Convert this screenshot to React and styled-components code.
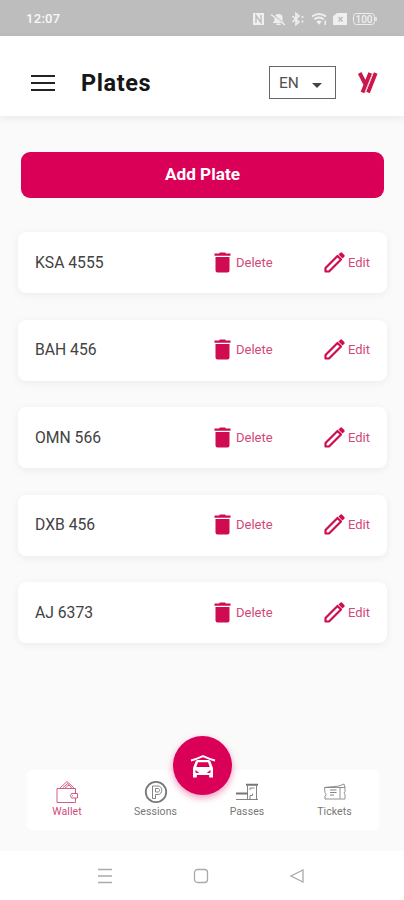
import styled, { createGlobalStyle, css } from 'styled-components'

const plates = ['KSA 4555', 'BAH 456', 'OMN 566', 'DXB 456', 'AJ 6373']

export default function App() {
  return (
    <>
      <GlobalStyle />
      <Screen>
        <StatusBar>
          <Clock>12:07</Clock>
          <StatusIcons />
        </StatusBar>
        <Header>
          <MenuButton aria-label="Menu">
            <span />
            <span />
            <span />
          </MenuButton>
          <Title>Plates</Title>
          <Language>
            EN
            <Caret />
          </Language>
          <Logo />
        </Header>
        <Main>
          <AddButton>Add Plate</AddButton>
          <PlateList>
            {plates.map((plate) => (
              <PlateCard key={plate}>
                <PlateNumber>{plate}</PlateNumber>
                <Action $width={112}>
                  <TrashIcon />
                  Delete
                </Action>
                <Action>
                  <EditIcon />
                  Edit
                </Action>
              </PlateCard>
            ))}
          </PlateList>
        </Main>
        <TabBar>
          <Tab $active>
            <WalletIcon />
            Wallet
          </Tab>
          <Tab>
            <SessionsIcon />
            Sessions
          </Tab>
          <Tab>
            <PassesIcon />
            Passes
          </Tab>
          <Tab>
            <TicketsIcon />
            Tickets
          </Tab>
          <ParkButton aria-label="Park">
            <CarIcon />
          </ParkButton>
        </TabBar>
        <SystemNav>
          <svg width="16" height="16" viewBox="0 0 16 16">
            <path d="M1 1.500h14M1 8h14M1 14.500h14" />
          </svg>
          <svg width="16" height="16" viewBox="0 0 16 16">
            <rect x="1.500" y="1.500" width="13" height="13" rx="3" />
          </svg>
          <svg width="16" height="16" viewBox="0 0 16 16">
            <path d="M14 2v12L2 8z" />
          </svg>
        </SystemNav>
      </Screen>
    </>
  )
}

function StatusIcons() {
  return (
    <StatusSvg width="126" height="16" viewBox="0 0 126 16">
      {/* nfc */}
      <path d="M2 2h11v12H2z" fill="#efefef" />
      <path d="M5 12V4.500l5 7V4" stroke="#bdbdbd" strokeWidth="1.400" fill="none" />
      {/* muted bell */}
      <path d="M21.500 12l2-2V6.500q0-3.500 4-3.500t4 3.500V10l2 2zM25.500 12.500h4V14h-4z" fill="#efefef" />
      <path d="M21 3l13 11" stroke="#bdbdbd" strokeWidth="2" />
      <path d="M20 3.500l14 10.500" stroke="#efefef" strokeWidth="1.400" />
      {/* bluetooth */}
      <path d="M41.500 5l6.500 6-3 2.500v-11l3 2.500-6.500 6M51.500 5v2M51.500 9.500v2" stroke="#efefef" strokeWidth="1.600" fill="none" />
      {/* wifi */}
      <path d="M61 5.500q7-5 14 0M63.300 8.300q4.700-3.500 9.400 0" stroke="#efefef" strokeWidth="2" fill="none" />
      <path d="M65.300 10.500q2.700-2 5.400 0L68 13.800zM73.500 9.500H75v4.500h-1.500z" fill="#efefef" />
      {/* sim */}
      <path d="M86 2h10v12H82V5.500z" fill="#efefef" />
      <path d="M87.500 6l4 4.500M91.500 6l-4 4.500" stroke="#bdbdbd" strokeWidth="1.500" />
      {/* battery */}
      <rect x="102.500" y="2.500" width="21" height="11" rx="3" fill="none" stroke="#ededed" />
      <path d="M125 6v4" stroke="#ededed" strokeWidth="1.500" />
      <text x="113" y="11.500" textAnchor="middle" fontSize="10" fontWeight="500" fill="#efefef">100</text>
    </StatusSvg>
  )
}

function Logo() {
  return (
    <svg width="22" height="24" viewBox="0 0 22 24" fill="none" stroke="#ca184d" strokeWidth="3.900">
      <path d="M2.700 2l5.300 10.500M13.200 2L5.500 21.500M18.700 2L11 21.500" />
      <path d="M16 2L8 22" stroke="#f3c6d3" strokeWidth="1" />
    </svg>
  )
}

function TrashIcon() {
  return (
    <svg width="27" height="27" viewBox="0 0 27 27" fill="currentColor">
      <path d="M5.500 4.500H10l1-1h5l1 1h4.500v2.200h-16zM6.500 8h14v13.500q0 2-2 2h-10q-2 0-2-2z" />
    </svg>
  )
}

function EditIcon() {
  return (
    <svg width="27" height="27" viewBox="0 0 27 27">
      <path
        d="M4.500 22.500v-3.500L16.500 7l3.500 3.500L8 22.500z"
        fill="none"
        stroke="currentColor"
        strokeWidth="2.200"
        strokeLinejoin="round"
      />
      <path d="M17.500 5.500l1.800-1.800q.9-.9 1.800 0l2.200 2.200q.9.900 0 1.800l-1.800 1.800z" fill="currentColor" />
    </svg>
  )
}

function WalletIcon() {
  return (
    <svg width="24" height="24" viewBox="0 0 24 24">
      <path d="M2 8.500h18.500v5M20.500 18v4.500H2v-14M4.500 8.500L12 1.500l7.500 7M8 7.500l5-4 4 5M14 5l-4 3" />
      <path d="M16.500 13.500h6V18h-6q-2-2.200 0-4.500zM17 15.800h1" />
    </svg>
  )
}

function SessionsIcon() {
  return (
    <svg width="24" height="24" viewBox="0 0 24 24">
      <circle cx="12" cy="12" r="10.200" strokeWidth="1.800" />
      <path d="M8.500 18.500V6H14c5 0 5 8.500 0 8.500h-2.500v4zM11.500 8.500H14c2 0 2 3.500 0 3.500h-2.500z" />
    </svg>
  )
}

function PassesIcon() {
  return (
    <svg width="24" height="24" viewBox="0 0 24 24">
      <path d="M1 19.500h22M12.500 19.500v-14M21.500 5.500v14M15 19.500v-4h2.500v-2M15 10V8h4.500" />
      <path d="M11 4.800h12M1 13.500h12" strokeWidth="1.900" />
    </svg>
  )
}

function TicketsIcon() {
  return (
    <svg width="24" height="24" viewBox="0 0 24 24">
      <path
        strokeWidth=".8"
        d="M1.500 7.500L16 6l5-2 1 3.500v4q-2 1.500 0 3v4.500h-20v-3q2.500-1.700 0-3.500zM2 7.500h20M17 7.500v11"
      />
      <path d="M7 10h6.500M7 12.500h6.500M7 15h4" />
    </svg>
  )
}

function CarIcon() {
  return (
    <svg width="26" height="26" viewBox="0 0 26 26">
      <path d="M1 7.500Q7 6 13 3.200Q19 6 25 7.500" fill="none" stroke="#fff" strokeWidth="2" />
      <path
        fillRule="evenodd"
        fill="#fff"
        d="M7.500 7h11q1.500 0 2 1.500l2.500 6.500V24.500h-3.800V22H6.800v2.500H3V15l2.500-6.500Q6 7 7.500 7zM8 9.300L6.300 14h13.400L18 9.300zM5.500 17v2.500q2 1 3.500 0.300zM20.500 17v2.500q-2 1-3.500 0.300z"
      />
    </svg>
  )
}

const GlobalStyle = createGlobalStyle`
  * {
    box-sizing: border-box;
  }

  body {
    margin: 0;
    font-family: Roboto, sans-serif;
  }

  button {
    border: 0;
    padding: 0;
    background: none;
    font-family: inherit;
  }
`

const Screen = styled.div`
  display: flex;
  flex-direction: column;
  width: 404px;
  height: 900px;
  background: #fafafa;
  overflow: hidden;
`

const StatusBar = styled.div`
  display: flex;
  align-items: center;
  justify-content: space-between;
  flex: 0 0 36px;
  padding: 1px 27px 0 26px;
  background: #bdbdbd;
  color: #f8f8f8;
`

const Clock = styled.span`
  font-size: 13px;
  font-weight: 500;
  letter-spacing: 0.3px;
`

const StatusSvg = styled.svg`
  font-family: Roboto, sans-serif;
`

const Header = styled.header`
  display: flex;
  align-items: center;
  flex: 0 0 80px;
  padding: 13px 25px 0 31px;
  background: #fff;
  box-shadow: 0 2px 8px rgba(0, 0, 0, 0.07);
`

const MenuButton = styled.button`
  display: flex;
  flex-direction: column;
  gap: 5px;
  width: 24px;
  margin-right: 26px;

  span {
    height: 2px;
    background: #222;
  }
`

const Title = styled.h1`
  flex: 1;
  margin: 0;
  font-size: 23.500px;
  font-weight: 700;
  letter-spacing: 0.6px;
  line-height: 28px;
  color: #161616;
`

const Language = styled.div`
  display: flex;
  align-items: center;
  justify-content: space-between;
  width: 67px;
  height: 33px;
  margin-right: 21px;
  padding: 0 13px 0 9px;
  border: 1px solid #666;
  font-size: 15.500px;
  color: #505050;
`

const Caret = styled.span`
  margin-top: 5px;
  border: 5.500px solid transparent;
  border-top-color: #444;
  border-bottom: 0;
`

const Main = styled.main`
  flex: 1;
  padding: 36px 17px 0 18px;
`

const AddButton = styled.button`
  display: block;
  width: 363px;
  height: 46px;
  margin: 0 0 34px 3px;
  padding-bottom: 2px;
  border-radius: 9px;
  background: #da0057;
  color: #fff;
  font-size: 17.200px;
  font-weight: 700;
`

const PlateList = styled.div`
  display: flex;
  flex-direction: column;
  gap: 26.500px;
`

const PlateCard = styled.div`
  display: flex;
  align-items: center;
  height: 61px;
  padding: 0 17px 1px 17px;
  border-radius: 8px;
  background: #fff;
  box-shadow: 0 2px 8px rgba(0, 0, 0, 0.06);
`

const PlateNumber = styled.span`
  flex: 1;
  font-size: 15.700px;
  color: #424242;
`

const Action = styled.button`
  display: flex;
  align-items: center;
  width: ${({ $width }) => ($width ? `${$width}px` : 'auto')};
  color: #d3477a;
  font-size: 13px;

  svg {
    color: #cf0c51;
  }
`

const TabBar = styled.nav`
  position: relative;
  display: grid;
  grid-template-columns: 80px 97px 86px 89px;
  height: 60px;
  margin: 0 25px 21px 27px;
  border-radius: 5px;
  background: #fff;
`

const Tab = styled.button`
  display: flex;
  flex-direction: column;
  align-items: center;
  padding-top: 10px;
  font-size: 10.500px;
  line-height: 16px;
  letter-spacing: 0.1px;
  color: #777;

  svg {
    fill: none;
    stroke: currentColor;
    stroke-width: 0.9;
  }

  ${({ $active }) =>
    $active &&
    css`
      color: #d04a7a;
    `}
`

const ParkButton = styled.button`
  position: absolute;
  top: -34px;
  left: 146px;
  display: flex;
  align-items: center;
  justify-content: center;
  width: 59px;
  height: 59px;
  border-radius: 50%;
  background: #da0057;
  box-shadow: 0 3px 7px rgba(218, 0, 87, 0.4);
`

const SystemNav = styled.div`
  display: flex;
  align-items: center;
  justify-content: center;
  gap: 80px;
  flex: 0 0 49px;
  padding-right: 2px;
  background: #fff;

  svg {
    fill: none;
    stroke: #aaa;
    stroke-width: 1.3;
  }
`
